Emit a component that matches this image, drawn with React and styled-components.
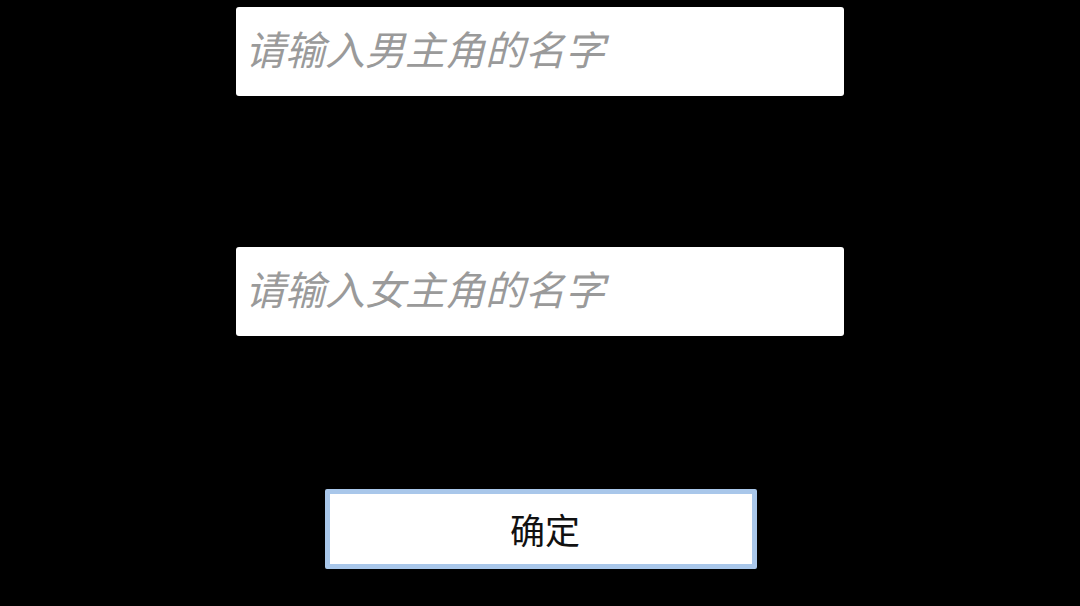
import React from "react";
import styled, { createGlobalStyle } from "styled-components";

const GlobalStyle = createGlobalStyle`
  html, body {
    margin: 0;
    padding: 0;
    background: #000;
  }
  body {
    font-family: "Noto Sans CJK SC", "Noto Sans", sans-serif;
  }
`;

const Page = styled.div`
  width: 1080px;
  height: 606px;
  background: #000;
  display: flex;
  flex-direction: column;
  align-items: center;
  padding-top: 7px;
  box-sizing: border-box;
  overflow: hidden;
`;

const NameInput = styled.input`
  width: 608px;
  height: 89px;
  box-sizing: border-box;
  border: none;
  border-radius: 3px;
  background: #fff;
  padding: 0 10px 7px 9px;
  margin-bottom: ${(p) => p.$gap}px;
  font-family: "Noto Sans CJK SC", sans-serif;
  font-size: 40px;
  color: #222;
  outline: none;
  &::placeholder {
    color: #9a9a9a;
    font-style: italic;
  }
`;

const ConfirmButton = styled.button`
  width: 432px;
  height: 80px;
  box-sizing: border-box;
  margin-top: 2px;
  margin-left: 2px;
  background: #fff;
  border: 5px solid #a9c7ea;
  border-radius: 2px;
  font-family: "Noto Sans CJK SC", sans-serif;
  font-size: 35px;
  color: #111;
  cursor: pointer;
  padding: 0 0 2px 8px;
`;

export default function App() {
  return (
    <>
      <GlobalStyle />
      <Page>
        <NameInput placeholder="请输入男主角的名字" $gap={151} />
        <NameInput placeholder="请输入女主角的名字" $gap={151} />
        <ConfirmButton>确定</ConfirmButton>
      </Page>
    </>
  );
}
